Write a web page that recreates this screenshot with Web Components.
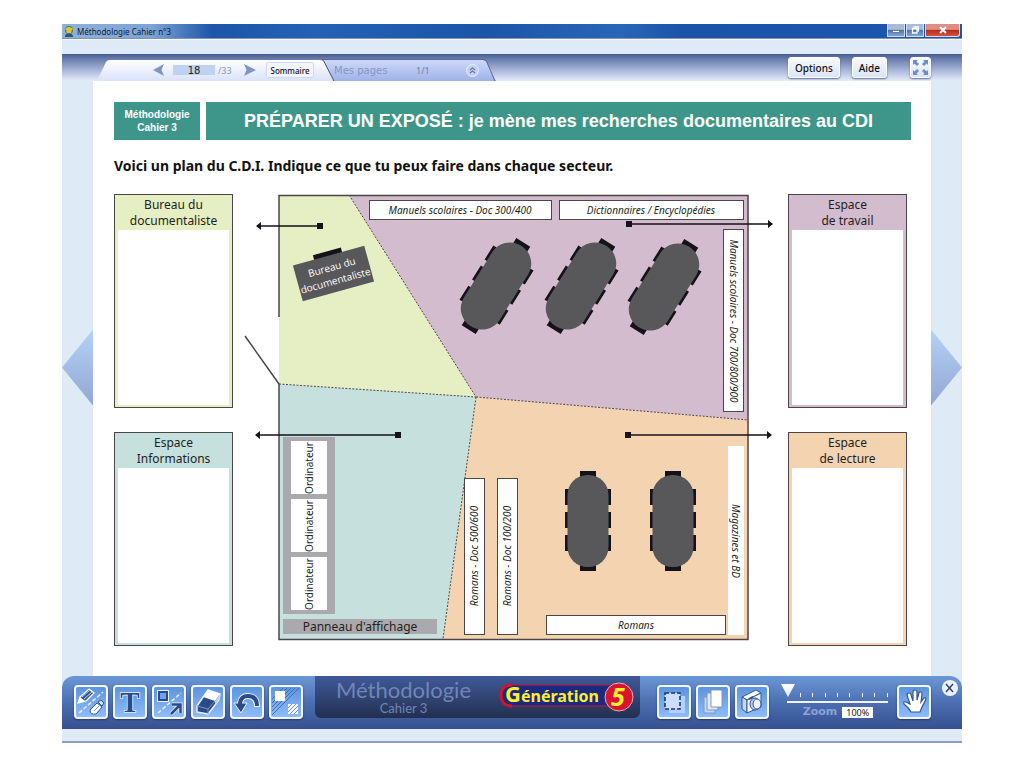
<!DOCTYPE html>
<html lang="fr">
<head>
<meta charset="utf-8">
<title>Méthodologie Cahier n°3</title>
<style>
  body {
    margin: 0;
    padding: 24px 62px;
    background: #fff;
    color: #231f20;
    font-family: "Noto Sans", sans-serif;
  }
</style>
</head>
<body>
<cahier-window>
  <title-bar slot="title">Méthodologie Cahier n°3</title-bar>
  <page-tabs slot="tabs"></page-tabs>
  <lesson-header>
    <span slot="book">Méthodologie<br>Cahier 3</span>
    PRÉPARER UN EXPOSÉ : je mène mes recherches documentaires au CDI
  </lesson-header>
  <lesson-exercise>
    <span slot="question">Voici un plan du C.D.I. Indique ce que tu peux faire dans chaque secteur.</span>
    <sector-card slot="left" style="--tint: #e6efc3">Bureau du<br>documentaliste</sector-card>
    <sector-card slot="left" style="--tint: #c5e0dd">Espace<br>Informations</sector-card>
    <floor-plan></floor-plan>
    <sector-card slot="right" style="--tint: #d3bccd">Espace<br>de travail</sector-card>
    <sector-card slot="right" style="--tint: #f4d3b1">Espace<br>de lecture</sector-card>
  </lesson-exercise>
  <tool-dock slot="dock"></tool-dock>
</cahier-window>

<script>
  class CahierWindow extends HTMLElement {
    constructor() {
      super();
      this.attachShadow({ mode: 'open' }).innerHTML = `
        <style>
          :host { display: block; background: #dfeaf7; }
          .strip { height: 15px; border-top: 1px solid #f4f8fd; box-sizing: border-box; }
          main { display: grid; grid-template-columns: 31px minmax(0, 1fr) 31px; }
          .page { background: #fff; padding: 21px 20px 30px 21px; }
          .turn {
            align-self: center;
            margin: 0 0 22px;
            padding: 0;
            border: 0;
            width: 31px;
            height: 76px;
            background: linear-gradient(#b3d2f6, #93a6d3);
          }
          .prev { clip-path: polygon(0 50%, 100% 0, 100% 100%); }
          .next { clip-path: polygon(0 0, 100% 50%, 0 100%); }
          .foot { height: 12px; border-bottom: 2px solid #8a9dba; }
        </style>
        <slot name="title"></slot>
        <div class="strip"></div>
        <slot name="tabs"></slot>
        <main>
          <button class="turn prev" aria-label="Page précédente"></button>
          <div class="page"><slot></slot></div>
          <button class="turn next" aria-label="Page suivante"></button>
        </main>
        <slot name="dock"></slot>
        <div class="foot"></div>
      `;
    }
  }

  class TitleBar extends HTMLElement {
    constructor() {
      super();
      this.attachShadow({ mode: 'open' }).innerHTML = `
        <style>
          :host {
            display: flex;
            align-items: center;
            height: 15px;
            box-sizing: border-box;
            gap: 1px;
            padding: 0 2px;
            font-size: 8px;
            color: #101c30;
            border-bottom: 1px solid #8794aa;
            background: linear-gradient(90deg, #8fb2dc 0, #7da3d4 90px, #1d55a8 150px, #2462b5 250px, #1c54a8 420px, #2a66b8 560px, #1b53a8 620px, #1c57ae 100%);
          }
          .name { flex: 1; margin-left: 2px; }
          button {
            width: 18px;
            height: 13px;
            align-self: flex-start;
            display: grid;
            place-items: center;
            padding: 0;
            border: 1px solid #d3dff0;
            border-top: 0;
            background: linear-gradient(#a9bdda 45%, #4d72ab 50%, #7fa5d6);
          }
          .close { width: 35px; border-radius: 0 0 3px 0; background: linear-gradient(#dc9084 45%, #b52c16 50%, #d6523a); }
        </style>
        <svg width="10" height="11" viewBox="0 0 10 11">
          <circle cx="5" cy="4" r="4" fill="#3c8a3c"/>
          <circle cx="5" cy="5" r="2.6" fill="#f2b84a"/>
          <path d="M1 11q0-4 4-3.500q4-.5 4 3.500z" fill="#205a7a"/>
          <path d="M1 3q4-4 8 0l-1 1H2z" fill="#e0c53b"/>
        </svg>
        <span class="name"><slot></slot></span>
        <button aria-label="Réduire"><svg width="8" height="8"><path d="M.5 4.500h7v2h-7z" fill="#fff" stroke="#44536f" stroke-width=".6"/></svg></button>
        <button aria-label="Agrandir"><svg width="8" height="8"><path d="M2.500.8h5v5M1.500 2.500h4.500v4.500H1.500z" fill="none" stroke="#fff" stroke-width="1.300"/></svg></button>
        <button class="close" aria-label="Fermer"><svg width="8" height="8"><path d="M1 1l6 6M7 1L1 7" stroke="#fff" stroke-width="2"/></svg></button>
      `;
    }
  }

  class PageTabs extends HTMLElement {
    constructor() {
      super();
      this.attachShadow({ mode: 'open' }).innerHTML = `
        <style>
          :host {
            display: flex;
            height: 27px;
            padding: 0 31px 0 34px;
            background: linear-gradient(#46598c, #6378a8 15%, #a9b6d8 60%, #e6ecfb);
          }
          .tabs { display: grid; width: 401px; align-self: flex-end; }
          .tabs > * { grid-area: 1 / 1; }
          .row { display: flex; align-items: center; padding-left: 57px; font-size: 9px; }
          button { padding: 0; font: inherit; color: #111; }
          .arrow { border: 0; background: none; display: flex; }
          input {
            width: 42px;
            height: 10px;
            box-sizing: border-box;
            margin: 0 3px 0 9px;
            padding: 0;
            border: 0;
            background: #c0d2f4;
            font: 10px "DejaVu Sans", sans-serif;
            color: #222;
            text-align: center;
          }
          .total { width: 26px; color: #8c96aa; }
          .toc {
            width: 48px;
            height: 16px;
            margin-left: 10px;
            border: 1px solid #cfd8ee;
            border-radius: 2px;
            background: #f2f5fe;
            font-size: 8px;
            font-weight: 500;
          }
          .mine { width: 82px; margin-left: 20px; color: #8596c8; font: 10px "DejaVu Sans", sans-serif; }
          .count { width: 50px; color: #6d7cab; }
          .actions { margin-left: auto; display: flex; align-items: center; gap: 12px; }
          .actions button {
            height: 21px;
            padding: 0 6px;
            border: 1px solid #fafcff;
            border-radius: 3px;
            background: linear-gradient(#f8faff, #dbe4f9);
            box-shadow: 0 1px 2px #5f6f98;
            font-size: 10px;
            font-weight: 500;
          }
          .actions .full { width: 21px; padding: 0; margin-left: 11px; }
          .full svg { display: block; margin: auto; }
        </style>
        <nav class="tabs" aria-label="Pages">
          <svg width="401" height="22" aria-hidden="true">
            <defs>
              <linearGradient id="on" x2="0" y2="1"><stop stop-color="#fff"/><stop offset="1" stop-color="#d9e2fa"/></linearGradient>
              <linearGradient id="off" x2="0" y2="1"><stop stop-color="#cdd9fa"/><stop offset="1" stop-color="#9fb2e6"/></linearGradient>
            </defs>
            <path d="M226 1h161q3 0 4 3l9 18H237z" fill="url(#off)"/>
            <path d="M226 .5h161q3 0 4 3l8 18.500" fill="none" stroke="#59698f"/>
            <path d="M1 22L10 3q1-2 4-2h210q3 0 4 2l10 19z" fill="url(#on)"/>
            <path d="M226 .5q2 1 3 4l9 17.500" fill="none" stroke="#3f4f7c"/>
          </svg>
          <div class="row">
            <button class="arrow" aria-label="Page précédente"><svg width="11" height="12"><path d="M11 0L8.500 6 11 12 0 6z" fill="#7e97c2"/></svg></button>
            <input value="18" aria-label="Numéro de page">
            <span class="total">/33</span>
            <button class="arrow" aria-label="Page suivante"><svg width="12" height="12"><path d="M0 0l2.500 6L0 12 12 6z" fill="#7e97c2"/></svg></button>
            <button class="toc">Sommaire</button>
            <span class="mine">Mes pages</span>
            <span class="count">1/1</span>
            <button class="arrow" aria-label="Dérouler"><svg width="13" height="13"><circle cx="6.500" cy="6.500" r="6" fill="#c3d0f5" stroke="#e8eefc"/><path d="M4 6l2.500-2L9 6M4 9l2.500-2L9 9" fill="none" stroke="#6678a8" stroke-width="1.200"/></svg></button>
          </div>
        </nav>
        <div class="actions">
          <button>Options</button>
          <button>Aide</button>
          <button class="full" aria-label="Plein écran"><svg width="17" height="17" fill="#6a8fc6"><path d="M1 1h5L4.500 2.500 7 5 5 7 2.500 4.500 1 6zM16 1v5l-1.500-1.500L12 7l-2-2 2.500-2.500L11 1zM1 16v-5l1.500 1.500L5 10l2 2-2.500 2.500L6 16zM16 16h-5l1.500-1.500L10 12l2-2 2.500 2.500L16 11z"/></svg></button>
        </div>
      `;
    }
  }

  class LessonHeader extends HTMLElement {
    constructor() {
      super();
      this.attachShadow({ mode: 'open' }).innerHTML = `
        <style>
          :host {
            display: flex;
            gap: 6px;
            height: 38px;
            color: #fff;
            font-family: "Liberation Sans", Arial, sans-serif;
            font-weight: bold;
            text-align: center;
          }
          .book, h1 { margin: 0; background: #3e968a; display: grid; place-items: center; }
          .book { width: 86px; font-size: 10px; line-height: 13px; }
          h1 { flex: 1; font-size: 18px; }
        </style>
        <div class="book"><slot name="book"></slot></div>
        <h1><span><slot></slot></span></h1>
      `;
    }
  }

  class LessonExercise extends HTMLElement {
    constructor() {
      super();
      this.attachShadow({ mode: 'open' }).innerHTML = `
        <style>
          :host { display: block; }
          h2 { margin: 16px 0 18px; font-size: 14px; line-height: 20px; color: #111; }
          .board { display: grid; grid-template-columns: 119px minmax(0, 1fr) 119px; padding-right: 4px; }
          .side { display: flex; flex-direction: column; gap: 24px; }
        </style>
        <h2><slot name="question"></slot></h2>
        <div class="board">
          <div class="side"><slot name="left"></slot></div>
          <slot></slot>
          <div class="side"><slot name="right"></slot></div>
        </div>
      `;
    }
  }

  // Title on a tinted band, with a field for the answer below
  class SectorCard extends HTMLElement {
    constructor() {
      super();
      this.attachShadow({ mode: 'open' }).innerHTML = `
        <style>
          :host {
            display: flex;
            flex: 1;
            box-sizing: border-box;
            min-height: 214px;
            padding: 2px;
            border: 1px solid #4b4547;
            background: var(--tint);
          }
          label {
            flex: 1;
            min-width: 0;
            display: flex;
            flex-direction: column;
            font-size: 12px;
            line-height: 16px;
            text-align: center;
          }
          textarea {
            flex: 1;
            min-width: 0;
            box-sizing: border-box;
            margin: 1px 1px 0;
            padding: 4px;
            border: 0;
            background: #fff;
            resize: none;
            font: inherit;
          }
        </style>
        <label><span><slot></slot></span><textarea></textarea></label>
      `;
    }
  }

  class FloorPlan extends HTMLElement {
    constructor() {
      super();
      this.attachShadow({ mode: 'open' }).innerHTML = `
        <style>
          :host { display: block; }
          svg { display: block; width: 100%; overflow: visible; }
          text { font-size: 12px; text-anchor: middle; fill: #231f20; }
          .shelf text { font-size: 10px; font-style: italic; }
          .shelf rect { fill: #fff; stroke: #4b4547; }
          .shelf .bare { stroke: none; }
          .pc text { font-size: 10px; }
          .desk text { font-family: "Open Sans", sans-serif; font-size: 10px; fill: #fff; }
          .wall { fill: none; stroke: #4b4547; stroke-width: 1.500; }
          .limit { fill: none; stroke: #4b4547; stroke-dasharray: 2 1.500; }
        </style>
        <svg viewBox="233 194 555 452" role="img" aria-label="Plan du C.D.I.">
          <defs>
            <g id="table">
              <path d="M-8 -50H8v6H-8zM-8 44H8v6H-8z" fill="#15121a"/>
              <path d="M-23 -32h4v16h-4zM-23 -9h4V7h-4zM-23 14h4v16h-4zM19 -32h4v16h-4zM19 -9h4V7h-4zM19 14h4v16h-4z" fill="#15121a"/>
              <rect x="-20.500" y="-46" width="41" height="92" rx="20" fill="#58585a"/>
            </g>
            <g id="pointer">
              <rect x="-3" y="-3" width="6" height="6" fill="#15121a"/>
            </g>
          </defs>

          <path d="M279 195h70l127 202-197-13z" fill="#e6efc3"/>
          <path d="M349 195h399v225l-272-23z" fill="#d3bccd"/>
          <path d="M279 384l197 13-33 242H279z" fill="#c5e0dd"/>
          <path d="M476 397l272 23v219H443z" fill="#f4d3b1"/>
          <path class="limit" d="M349 195l127 202M279 384l197 13M476 397l272 23M476 397l-33 242"/>
          <path class="wall" d="M279 317V195.500H748V639.500H279V384L245 336"/>

          <g class="shelf">
            <rect x="369.500" y="200.500" width="182" height="19"/><text x="460" y="214">Manuels scolaires - Doc 300/400</text>
            <rect x="559.500" y="200.500" width="184" height="19"/><text x="651" y="214">Dictionnaires / Encyclopédies</text>
            <rect x="723.500" y="229.500" width="20" height="182"/><text transform="translate(730 321) rotate(90)">Manuels scolaires - Doc 700/800/900</text>
            <rect class="bare" x="728" y="446" width="16" height="189"/><text transform="translate(732 541) rotate(90)">Magazines et BD</text>
            <rect x="464.500" y="478.500" width="20" height="156"/><text transform="translate(478 556) rotate(-90)">Romans - Doc 500/600</text>
            <rect x="497.500" y="478.500" width="20" height="156"/><text transform="translate(511 556) rotate(-90)">Romans - Doc 100/200</text>
            <rect x="546.500" y="615.500" width="179" height="19"/><text x="636" y="629">Romans</text>
          </g>

          <g class="desk" transform="translate(333.500 273.500) rotate(-15.500)">
            <rect x="-15" y="-23" width="29" height="6" fill="#15121a"/>
            <rect x="-37" y="-18.500" width="74" height="37" fill="#58585a"/>
            <text y="-3">Bureau du</text>
            <text y="11">documentaliste</text>
          </g>

          <use href="#table" transform="translate(496 286) rotate(32) scale(1.030)"/>
          <use href="#table" transform="translate(581 286) rotate(32) scale(1.030)"/>
          <use href="#table" transform="translate(664 287) rotate(32) scale(1.030)"/>
          <use href="#table" x="588" y="521"/>
          <use href="#table" x="673" y="521"/>

          <g class="pc">
            <path d="M283 437h52v177h-52zM283 619h154v15H283z" fill="#aaa9ad"/>
            <path d="M291 441h36v53h-36zM291 499h36v53h-36zM291 557h36v53h-36z" fill="#fff"/>
            <text transform="translate(313 468) rotate(-90)">Ordinateur</text>
            <text transform="translate(313 526) rotate(-90)">Ordinateur</text>
            <text transform="translate(313 584) rotate(-90)">Ordinateur</text>
          </g>
          <text x="360" y="631">Panneau d'affichage</text>

          <use href="#pointer" x="320" y="226"/>
          <use href="#pointer" x="629" y="224"/>
          <use href="#pointer" x="398" y="435"/>
          <use href="#pointer" x="628" y="435"/>
          <path d="M320 226h-60M629 224h140M398 435H259M628 435h140" stroke="#15121a" stroke-width="1.500"/>
          <path d="M256 226l5-4v8zM773 224l-5-4v8zM255 435l5-4v8zM772 435l-5-4v8z" fill="#15121a"/>
        </svg>
      `;
    }
  }

  class ToolButton extends HTMLElement {
    constructor() {
      super();
      this.attachShadow({ mode: 'open' }).innerHTML = `
        <style>
          :host { display: block; width: 34px; height: 34px; }
          button {
            width: 100%;
            height: 100%;
            display: grid;
            place-items: center;
            padding: 0;
            border: 2px solid #f3f7fd;
            border-radius: 4px;
            background: linear-gradient(#5c94dc, #8fbcfa);
            box-shadow: 0 1px 2px #27396b;
          }
        </style>
        <button><slot></slot></button>
      `;
    }

    connectedCallback() {
      this.shadowRoot.querySelector('button').setAttribute('aria-label', this.getAttribute('label') || '');
    }
  }

  class ZoomSlider extends HTMLElement {
    constructor() {
      super();
      this.attachShadow({ mode: 'open' }).innerHTML = `
        <style>
          :host { display: block; width: 114px; }
          .rail { display: grid; }
          .rail > * { grid-area: 1 / 1; }
          input { margin: 0; padding: 0; border: 0; }
          [type=range] { appearance: none; -webkit-appearance: none; width: 114px; height: 20px; background: none; }
          [type=range]::-webkit-slider-runnable-track { height: 20px; }
          [type=range]::-webkit-slider-thumb {
            -webkit-appearance: none;
            width: 14px;
            height: 13px;
            background: linear-gradient(#fff, #dfe8f8);
            clip-path: polygon(0 0, 100% 0, 50% 100%);
          }
          .value { display: flex; align-items: center; justify-content: center; gap: 5px; margin-top: 2px; }
          label { font: bold 11px "DejaVu Sans", sans-serif; line-height: 12px; color: #8ba3d6; }
          [type=text] { width: 31px; height: 11px; background: #fff; font: 9px "Noto Sans", sans-serif; text-align: center; color: #222; }
        </style>
        <div class="rail">
          <svg width="114" height="20" fill="#eef3fc" aria-hidden="true">
            <path d="M6 17h101v2H6zM19 9h1v4h-1zM31 9h1v4h-1zM44 9h1v4h-1zM56 9h1v4h-1zM68 9h1v4h-1zM81 9h1v4h-1zM93 9h1v4h-1zM106 9h1v4h-1z"/>
          </svg>
          <input type="range" min="100" max="500" value="100" aria-label="Niveau de zoom">
        </div>
        <div class="value"><label for="pct">Zoom</label><input id="pct" type="text" value="100%"></div>
      `;
    }
  }

  class ToolDock extends HTMLElement {
    constructor() {
      super();
      this.attachShadow({ mode: 'open' }).innerHTML = `
        <style>
          :host {
            display: flex;
            align-items: flex-start;
            height: 53px;
            padding: 0 4px 0 12px;
            border-radius: 12px 12px 0 0;
            background: linear-gradient(#6c97d6, #4c6fb2 50%, #35508f);
          }
          .tools { display: flex; gap: 5px; padding-top: 9px; }
          .brand {
            flex: 1;
            display: flex;
            align-items: flex-start;
            justify-content: space-between;
            height: 42px;
            margin: 0 17px 0 12px;
            padding: 0 5px 0 21px;
            box-sizing: border-box;
            border-radius: 0 0 6px 6px;
            background: linear-gradient(#3f5a99, #232f50);
            color: #7186b5;
            font-family: Lato, sans-serif;
            text-align: center;
          }
          .brand svg { overflow: visible; }
          .name, .sub { margin: 0; font-weight: normal; }
          .name { font-size: 22px; line-height: 27px; }
          .sub { font-size: 13px; line-height: 11px; }
          zoom-slider { margin: 8px 2px 0 12px; }
          .close {
            width: 16px;
            height: 16px;
            margin: 4px 0 0 11px;
            padding: 0;
            border: 0;
            border-radius: 50%;
            background: #e9f1fd;
            display: grid;
            place-items: center;
          }
        </style>
        <div class="tools">
          <tool-button label="Crayon et gomme"><svg width="30" height="30">
            <path d="M3 26L27 5" stroke="#e5f0ff" stroke-width="1.500" stroke-dasharray="4 2"/>
            <path d="M2 16l2-6L13 2l5 4-8 8z" fill="#34568f" stroke="#fff" stroke-width="1.300"/>
            <path d="M2 16l2-6 5 4z" fill="#fff"/><path d="M6 10l8-7M8 12l8-7" stroke="#bcd3f4"/>
            <path d="M14 23l7-7 5 4-6 7q-6 1-6-4z" fill="#fff" stroke="#34568f"/><path d="M22 15l3-2 3 3-2 3z" fill="#cfe0f8" stroke="#34568f"/><path d="M18 24l5-5" stroke="#8399bd"/>
          </svg></tool-button>
          <tool-button label="Texte"><svg width="30" height="30"><text x="15" y="25" text-anchor="middle" font-family="Liberation Serif, serif" font-weight="bold" font-size="29" fill="#2c4b85" stroke="#e5f0ff" stroke-width="1.500" paint-order="stroke">T</text></svg></tool-button>
          <tool-button label="Formes"><svg width="30" height="30">
            <path d="M4 26L27 6" stroke="#e5f0ff" stroke-width="1.500" stroke-dasharray="4 2"/>
            <path d="M5 5h8v8H5z" fill="none" stroke="#e5f0ff" stroke-width="4"/><path d="M5 5h8v8H5z" fill="#6ea3ea" stroke="#2c4b85" stroke-width="2"/>
            <path d="M17 27l8-8M18 17.500h8.500V26" fill="none" stroke="#e5f0ff" stroke-width="4"/><path d="M17 27l8-8M18 17.500h8.500V26" fill="none" stroke="#2c4b85" stroke-width="2.500"/>
          </svg></tool-button>
          <tool-button label="Gomme"><svg width="30" height="30">
            <path d="M4 19L15 3l12 4-1 6-11 14-11-2z" fill="#2c4b85" stroke="#e5f0ff" stroke-width="1.500" stroke-linejoin="round"/>
            <path d="M15 3l12 4-5 7-12-4z" fill="#fff"/><path d="M27 7l-1 6-4 5v-4z" fill="#c1d3ee"/><path d="M4 19l11 3 7-8M15 22v5" fill="none" stroke="#7397ce"/>
          </svg></tool-button>
          <tool-button label="Annuler"><svg width="30" height="30">
            <path d="M8 18V16q1-7 8-7 9 0 9 11" fill="none" stroke="#e5f0ff" stroke-width="6"/><path d="M2 16h13l-6 10z" fill="#2c4b85" stroke="#e5f0ff"/>
            <path d="M8 18V16q1-7 8-7 9 0 9 10" fill="none" stroke="#2c4b85" stroke-width="4"/>
          </svg></tool-button>
          <tool-button label="Remplissage"><svg width="30" height="30">
            <path d="M1 28L28 1M1 24L24 1M1 20L20 1M1 16L16 1M1 12L12 1" stroke="#3f6db8"/>
            <path d="M4 4h10v10H4z" fill="#fff"/><path d="M17 17h10v10H17z" fill="#eff5ff"/><path d="M17 21l4-4M17 25l8-8M19 27l8-8M23 27l4-4" stroke="#7a94c0"/>
          </svg></tool-button>
        </div>
        <div class="brand">
          <div>
            <p class="name">Méthodologie</p>
            <p class="sub">Cahier 3</p>
          </div>
          <svg width="136" height="40" viewBox="0 0 136 40">
            <rect x="2" y="9" width="120" height="21" rx="10.500" fill="#1b2a80" stroke="#c51832"/>
            <path d="M13 9Q2 9 2 19.500T13 30" fill="none" stroke="#d4142e" stroke-width="3"/>
            <text y="26" font-family="Noto Sans, sans-serif" font-weight="bold" fill="#fdf02e"><tspan x="6" font-size="22">G</tspan><tspan font-size="16">énération</tspan></text>
            <circle cx="120" cy="21" r="14" fill="#d81430" stroke="#eab0b4"/>
            <text x="119" y="30" text-anchor="middle" font-family="Noto Sans, sans-serif" font-style="italic" font-weight="bold" font-size="25" fill="#fdf02e">5</text>
          </svg>
        </div>
        <div class="tools">
          <tool-button label="Sélection"><svg width="30" height="30">
            <path d="M10 9h16v17H10z" fill="#b3d2fb"/><path d="M6 6h15v16H6z" fill="#c9dffb" stroke="#1f3768" stroke-width="1.600" stroke-dasharray="4 2"/>
          </svg></tool-button>
          <tool-button label="Pages"><svg width="30" height="30" stroke="#8097bd">
            <path d="M6 10h11v16H6z" fill="#bfd6f7"/><path d="M9 6h11v17H9z" fill="#dce9fb"/><path d="M13 3h11v17H13z" fill="#fff"/>
          </svg></tool-button>
          <tool-button label="Appareil photo"><svg width="30" height="30" stroke="#34568f" stroke-linejoin="round">
            <path d="M5 10l14-7 5 3-14 7z" fill="#fff"/><path d="M5 10l5 3v13l-5-4z" fill="#c6d8f2"/><path d="M10 13l14-7v14l-14 6z" fill="#f1f6fe"/>
            <ellipse cx="18" cy="17" rx="5" ry="6" fill="#b9cfef"/><ellipse cx="20" cy="17" rx="4" ry="5" fill="#e9f2fe"/><path d="M12 12l4-2" stroke-width="2"/>
          </svg></tool-button>
        </div>
        <zoom-slider></zoom-slider>
        <div class="tools">
          <tool-button label="Main"><svg width="30" height="30">
            <path d="M12 25q-2-4-7-8-1-3 2-2l4 2-3-9q0-2 2-2t2 2l2 6V5q0-2 2-2t2 2v8l2-7q1-2 2-1t1 2l-1 8 3-4q2-1 2 1l-4 8-2 5z" fill="#fff" stroke="#34568f" stroke-width="1.200"/>
          </svg></tool-button>
        </div>
        <button class="close" aria-label="Fermer la barre"><svg width="10" height="10"><path d="M1 1l7 8M8 1L1 9" stroke="#333d55" stroke-width="1.400"/></svg></button>
      `;
    }
  }

  customElements.define('cahier-window', CahierWindow);
  customElements.define('title-bar', TitleBar);
  customElements.define('page-tabs', PageTabs);
  customElements.define('lesson-header', LessonHeader);
  customElements.define('lesson-exercise', LessonExercise);
  customElements.define('sector-card', SectorCard);
  customElements.define('floor-plan', FloorPlan);
  customElements.define('tool-button', ToolButton);
  customElements.define('zoom-slider', ZoomSlider);
  customElements.define('tool-dock', ToolDock);
</script>
</body>
</html>
